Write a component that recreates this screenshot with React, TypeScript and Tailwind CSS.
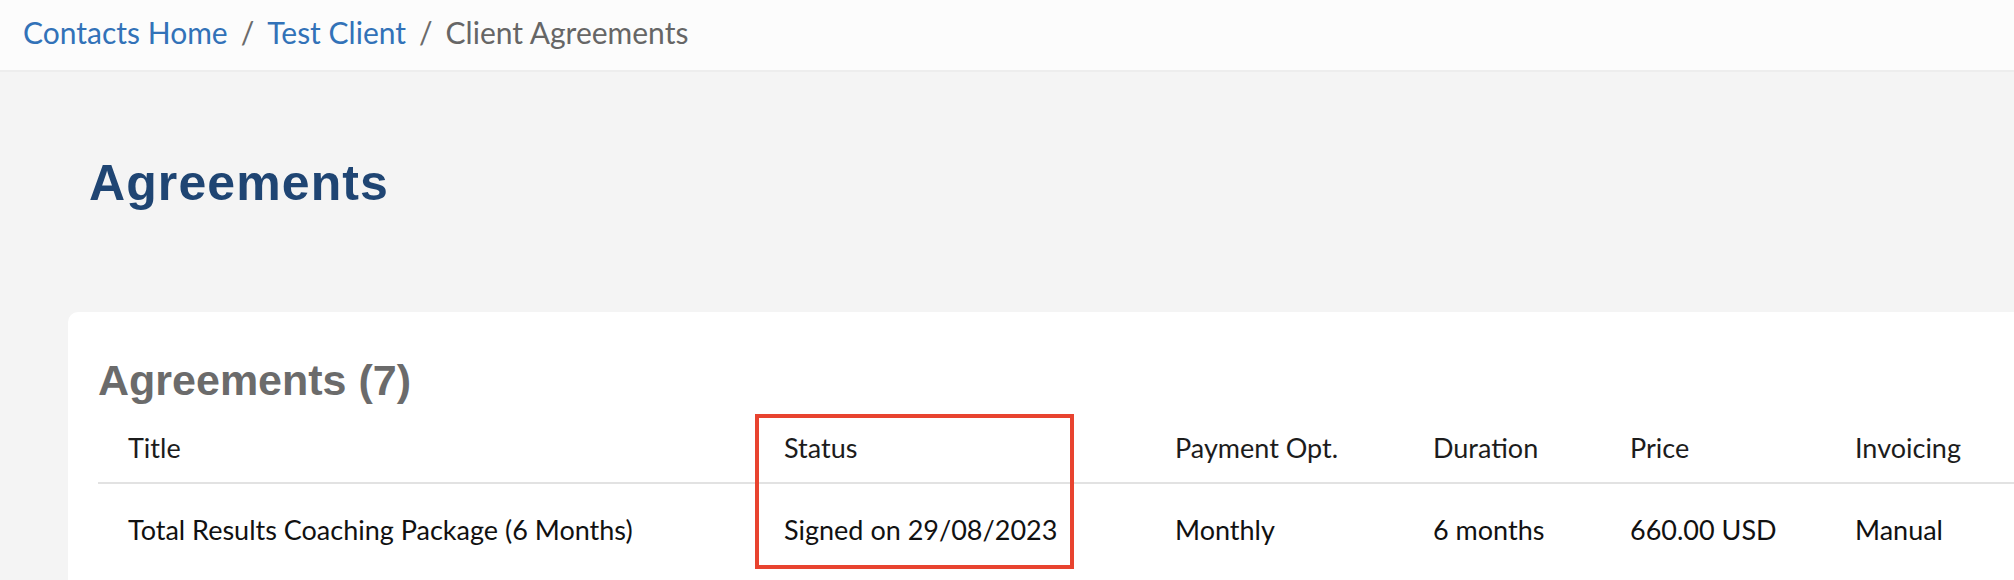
const columns = [
  { label: 'Title', width: 'w-[656px]' },
  { label: 'Status', width: 'w-[391px]' },
  { label: 'Payment Opt.', width: 'w-[258px]' },
  { label: 'Duration', width: 'w-[197px]' },
  { label: 'Price', width: 'w-[225px]' },
  { label: 'Invoicing', width: 'w-[220px]' },
];

const rows = [
  ['Total Results Coaching Package (6 Months)', 'Signed on 29/08/2023', 'Monthly', '6 months', '660.00 USD', 'Manual'],
];

function Breadcrumbs() {
  return (
    <nav className="flex h-[72px] items-center border-b-2 border-[#ededed] bg-[#fcfcfc] pb-[6px] pl-[23px] text-[30px]">
      <a className="text-[#3272b8]">Contacts Home</a>
      <span className="mx-[13px] text-[#6b6b6b]">/</span>
      <a className="text-[#3272b8]">Test Client</a>
      <span className="mx-[13px] text-[#6b6b6b]">/</span>
      <span className="text-[#666666]">Client Agreements</span>
    </nav>
  );
}

export default function App() {
  return (
    <div className="h-[580px] w-[2014px] overflow-hidden bg-[#f4f4f4] font-['Lato','Liberation_Sans',sans-serif]">
      <Breadcrumbs />
      <div className="pl-[68px]">
        <h1 className="ml-[21px] pt-[81px] font-['Liberation_Sans',sans-serif] text-[50px] leading-[60px] font-bold tracking-[1.1px] text-[#1f4573]">
          Agreements
        </h1>
        <div className="mt-[99px] h-[400px] w-[2000px] rounded-[10px] bg-white pt-[43px] pl-[30px]">
          <h2 className="font-['Liberation_Sans',sans-serif] text-[43px] leading-[50px] font-bold text-[#6b6b6b]">
            Agreements (7)
          </h2>
          <div className="relative">
            <div className="flex h-[79px] items-center border-b-2 border-[#e2e2e2] pt-[10px] text-[27px] text-[#1c1c1c]">
              {columns.map((c) => (
                <div key={c.label} className={`${c.width} shrink-0 pl-[30px]`}>
                  {c.label}
                </div>
              ))}
            </div>
            {rows.map((r, i) => (
              <div key={i} className="flex h-[92px] items-center text-[27px] text-[#111111]">
                {r.map((cell, j) => (
                  <div key={j} className={`${columns[j].width} shrink-0 pl-[30px]`}>
                    {cell}
                  </div>
                ))}
              </div>
            ))}
            {/* annotation box round the status column */}
            <div className="absolute top-[9px] left-[657px] h-[155px] w-[319px] border-4 border-[#e8432f]" />
          </div>
        </div>
      </div>
    </div>
  );
}
